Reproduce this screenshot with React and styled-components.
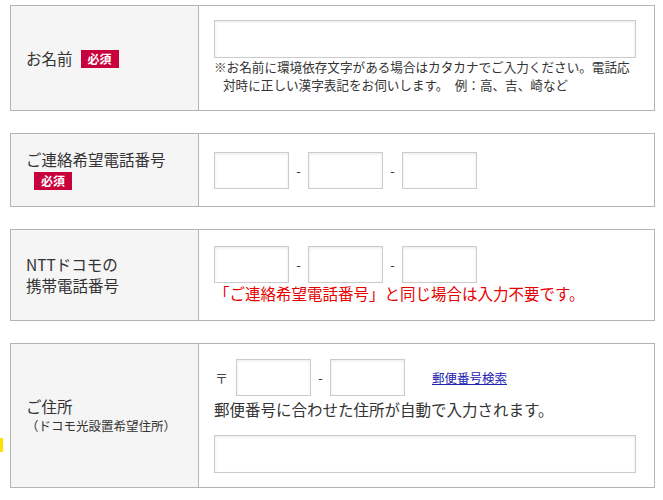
import React from "react";
import styled, { createGlobalStyle } from "styled-components";

const GlobalStyle = createGlobalStyle`
  body {
    margin: 0;
    background: #fff;
    color: #333;
    font-family: "Noto Sans CJK JP", "Noto Sans", sans-serif;
  }
`;

function App() {
  return (
    <>
      <GlobalStyle />
      <Page>
        <Section>
          <Label>
            <LabelText>
              お名前<Required>必須</Required>
            </LabelText>
          </Label>
          <Field top={14} bottom={16}>
            <TextInput type="text" />
            <Note>
              ※お名前に環境依存文字がある場合はカタカナでご入力ください。電話応
              <br />
              対時に正しい漢字表記をお伺いします。　例：高、吉、崎など
            </Note>
          </Field>
        </Section>

        <Section>
          <Label>
            <LabelText>
              ご連絡希望電話番号<Required>必須</Required>
            </LabelText>
          </Label>
          <Field>
            <Row>
              <ShortInput type="tel" />
              <Dash>-</Dash>
              <ShortInput type="tel" />
              <Dash>-</Dash>
              <ShortInput type="tel" />
            </Row>
          </Field>
        </Section>

        <Section>
          <Label>
            <LabelText>
              NTTドコモの
              <br />
              携帯電話番号
            </LabelText>
          </Label>
          <Field bottom={16}>
            <Row>
              <ShortInput type="tel" />
              <Dash>-</Dash>
              <ShortInput type="tel" />
              <Dash>-</Dash>
              <ShortInput type="tel" />
            </Row>
            <Warning>「ご連絡希望電話番号」と同じ場合は入力不要です。</Warning>
          </Field>
        </Section>

        <Section>
          <Label>
            <LabelText>
              ご住所
              <Sub>（ドコモ光設置希望住所）</Sub>
            </LabelText>
          </Label>
          <Field top={15} bottom={14}>
            <Row>
              <PostMark>〒</PostMark>
              <ShortInput type="text" />
              <Dash>-</Dash>
              <ShortInput type="text" />
              <SearchLink href="#">郵便番号検索</SearchLink>
            </Row>
            <Hint>郵便番号に合わせた住所が自動で入力されます。</Hint>
            <TextInput type="text" />
          </Field>
        </Section>
      </Page>
      <EdgeTab />
    </>
  );
}

export default App;

const Page = styled.div`
  padding: 5px 8px 10px 10px;
  display: flex;
  flex-direction: column;
  gap: 22px;
`;

const Section = styled.div`
  display: grid;
  grid-template-columns: 188px 1fr;
  border: 1px solid #b4b4b4;
`;

const Label = styled.div`
  background: #f5f5f5;
  border-right: 1px solid #b4b4b4;
  padding: 15px 12px 15px 15px;
  display: flex;
  align-items: center;
`;

const LabelText = styled.div`
  font-size: 15.5px;
  line-height: 21px;
  color: #333;
`;

const Required = styled.span`
  display: inline-block;
  vertical-align: 1px;
  margin-left: 8px;
  padding: 0 7px;
  background: #c8003c;
  color: #fff;
  font-size: 12px;
  font-weight: bold;
  line-height: 18px;
  height: 18px;
`;

const Sub = styled.span`
  display: block;
  font-size: 12.5px;
  line-height: 18px;
`;

const Field = styled.div`
  padding: ${(p) => p.top ?? 16}px 18px ${(p) => p.bottom ?? 16}px 15px;
  display: flex;
  flex-direction: column;
  justify-content: center;
  min-width: 0;
`;

const inputBase = `
  box-sizing: border-box;
  height: 37px;
  border: 1px solid #cccccc;
  background: #fff;
  box-shadow: inset 0 1px 3px rgba(0, 0, 0, 0.09);
  font: inherit;
  outline: none;
  margin: 0;
`;

const TextInput = styled.input`
  ${inputBase}
  width: 100%;
  height: 38px;
`;

const ShortInput = styled.input`
  ${inputBase}
  width: 75px;
`;

const Row = styled.div`
  display: flex;
  align-items: center;
`;

const Dash = styled.span`
  width: 19px;
  text-align: center;
  font-size: 13px;
  color: #333;
`;

const Note = styled.p`
  margin: 0;
  font-size: 12.6px;
  line-height: 18px;
  white-space: nowrap;
  padding-left: 9px;
  text-indent: -9px;
`;

const Warning = styled.p`
  margin: 0;
  font-size: 15.5px;
  line-height: 21px;
  color: #e60000;
`;

const PostMark = styled.span`
  font-size: 13px;
  color: #444;
  margin: 0 8px 0 1px;
`;

const SearchLink = styled.a`
  margin-left: 27px;
  font-size: 12.5px;
  color: #2222b0;
  text-decoration: underline;
`;

const Hint = styled.p`
  margin: 3px 0 15px;
  font-size: 15.5px;
  line-height: 21px;
`;

// small yellow tab peeking in at the left edge of the page
const EdgeTab = styled.div`
  position: absolute;
  left: 0;
  top: 438px;
  width: 3px;
  height: 14px;
  background: #ffe100;
`;
